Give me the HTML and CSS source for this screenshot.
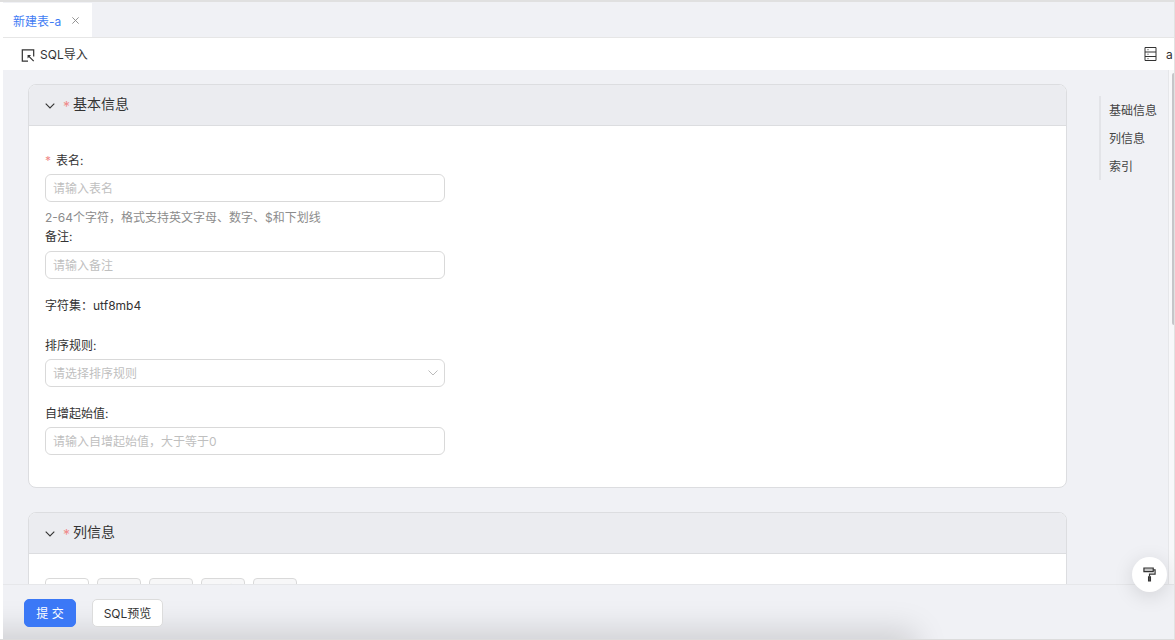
FILE: index.html
```html
<!DOCTYPE html>
<html lang="zh-CN">
<head>
<meta charset="utf-8">
<title>新建表-a</title>
<link rel="stylesheet" href="styles.css">
</head>
<body>
<div class="frame">
  <nav class="tabs">
    <div class="tab"><span class="tab-name">新建表-a</span>
      <svg class="tab-close" viewBox="0 0 10 10"><path d="M1.500 1.500l7 7M8.500 1.500l-7 7"/></svg>
    </div>
  </nav>
  <div class="toolbar">
    <div class="tool">
      <svg class="tool-icon" viewBox="0 0 16 16"><path d="M8 14.500H1.500V1.500h13V9" /><path d="M8.500 8.500l6 6" /><path class="fill" d="M7.500 7.500h4l-4 4z"/></svg>
      <span class="tool-text">SQL导入</span>
    </div>
    <div class="db">
      <svg class="db-icon" viewBox="0 0 13 14"><path d="M1 .5h11v13H1zM1 5h11M1 9.500h11"/><path class="thin" d="M3 2.700h2M3 7.200h2M3 11.700h2"/></svg>
      <span class="db-name">a</span>
    </div>
  </div>
  <div class="main">
    <div class="content">
      <section class="card">
        <header class="card-head">
          <svg class="chevron" viewBox="0 0 10 6"><path d="M.7.7L5 5l4.300-4.300"/></svg>
          <span class="star">*</span><span class="card-title">基本信息</span>
        </header>
        <div class="card-body basic">
          <div class="field tight">
            <label class="label"><span class="req">*</span>表名:</label>
            <input class="input" placeholder="请输入表名">
            <div class="help">2-64个字符，格式支持英文字母、数字、$和下划线</div>
          </div>
          <div class="field">
            <label class="label">备注:</label>
            <input class="input" placeholder="请输入备注">
          </div>
          <div class="charset">字符集：utf8mb4</div>
          <div class="field">
            <label class="label">排序规则:</label>
            <div class="input select"><span class="select-text">请选择排序规则</span>
              <svg class="select-arrow" viewBox="0 0 10 6"><path d="M.5.5L5 5 9.500.5"/></svg>
            </div>
          </div>
          <div class="field last">
            <label class="label">自增起始值:</label>
            <input class="input" placeholder="请输入自增起始值，大于等于0">
          </div>
        </div>
      </section>
      <section class="card">
        <header class="card-head">
          <svg class="chevron" viewBox="0 0 10 6"><path d="M.7.7L5 5l4.300-4.300"/></svg>
          <span class="star">*</span><span class="card-title">列信息</span>
        </header>
        <div class="card-body cols">
          <button class="mini">添加</button>
          <button class="mini off">上移</button>
          <button class="mini off">下移</button>
          <button class="mini off">删除</button>
          <button class="mini off">复制</button>
        </div>
      </section>
    </div>
    <aside class="anchor">
      <a class="anchor-link">基础信息</a>
      <a class="anchor-link">列信息</a>
      <a class="anchor-link">索引</a>
    </aside>
    <div class="gutter"><div class="thumb"></div></div>
  </div>
  <footer class="foot">
    <button class="btn primary">提 交</button>
    <button class="btn">SQL预览</button>
  </footer>
  <button class="fab" aria-label="主题">
    <svg viewBox="0 0 14 16"><path class="roller" d="M1 1h10v4H1z"/><path d="M11 3h2v4.500H7V10"/><path d="M6 10.500h2v4.500H6z" class="solid"/></svg>
  </button>
</div>
</body>
</html>
```
FILE: styles.css
```css
* { box-sizing: border-box; }
html, body { margin: 0; height: 100%; overflow: hidden; }
body {
  font-family: Inter, "Noto Sans CJK SC", "Liberation Sans", sans-serif;
  font-size: 12px;
  color: #333;
  background: #fff;
}
.frame {
  position: relative;
  height: 100vh;
  display: flex;
  flex-direction: column;
  padding-left: 3px;
  border-top: 2px solid #e0e0e0;
  border-bottom: 1px solid #dcdcdc;
  border-right: 1px solid #e2e2e2;
  overflow: hidden;
}
.tabs {
  height: 36px;
  flex: none;
  background: #f0f1f5;
  border-bottom: 1px solid #e6e6e6;
  padding-top: 1px;
}
.tab {
  width: 89px;
  height: 34px;
  background: #fff;
  display: flex;
  align-items: center;
  padding-left: 10px;
}
.tab-name { color: #3f7cf4; font-size: 12px; }
.tab-close { width: 9px; height: 9px; margin-left: 10px; margin-top: 1px; }
.tab-close path { stroke: #888; stroke-width: 1; fill: none; }
.toolbar {
  height: 32px;
  flex: none;
  background: #fff;
  display: flex;
  align-items: center;
  justify-content: space-between;
  padding-left: 18px;
}
.tool { display: flex; align-items: center; gap: 5px; color: #333; }
.tool-text { margin-top: -2px; }
.tool-icon { width: 14px; height: 15px; margin-top: 3px; }
.tool-icon path { fill: none; stroke: #333; stroke-width: 1.4; }
.tool-icon .fill { fill: #333; stroke: none; }
.db { display: flex; align-items: center; gap: 9px; width: 30px; flex: none; overflow: hidden; }
.db-icon { width: 13px; height: 14px; flex: none; }
.db-icon path { fill: none; stroke: #333; stroke-width: 1; }
.db-icon .thin { stroke: #999; }
.db-name { font-size: 12px; }
.main {
  flex: 1;
  min-height: 0;
  display: flex;
  background: #f0f1f5;
  overflow: hidden;
}
.content {
  width: 1096px;
  flex: none;
  padding: 14px 0 0 25px;
}
.card {
  width: 1039px;
  background: #fff;
  border: 1px solid #dcdde0;
  border-radius: 8px;
  overflow: hidden;
  margin-bottom: 24px;
}
.card-head {
  height: 41px;
  background: #ebecf0;
  border-bottom: 1px solid #dcdde0;
  display: flex;
  align-items: center;
  padding-left: 16px;
}
.chevron { width: 10px; height: 6px; margin-top: 1px; }
.chevron path { fill: none; stroke: #333; stroke-width: 1.1; }
.star { color: #f08a8a; font-size: 14px; margin-left: 8px; width: 8px; line-height: 14px; padding-top: 3px; }
.card-title { font-size: 14px; color: #333; margin: -2px 0 0 2px; line-height: 18px; }
.card-body { padding-left: 16px; }
.basic { padding-top: 26px; padding-bottom: 32px; }
.field { display: flex; flex-direction: column; align-items: flex-start; margin-bottom: 18px; }
.field.tight { margin-bottom: 0; }
.field.tight + .field .label { margin-bottom: 5px; }
.field.last { margin-bottom: 0; }
.label { line-height: 18px; height: 18px; margin-bottom: 4px; color: #333; }
.req { color: #f08a8a; margin-right: 5px; }
.input {
  width: 400px;
  height: 28px;
  border: 1px solid #d9d9d9;
  border-radius: 6px;
  background: #fff;
  padding: 0 7px;
  font: inherit;
  outline: none;
}
.input::placeholder { color: #bfbfbf; }
.select {
  display: flex;
  align-items: center;
  justify-content: space-between;
  color: #bfbfbf;
  padding-right: 6px;
}
.select-text { padding-bottom: 2px; }
.select-arrow { width: 10px; height: 6px; }
.select-arrow path { fill: none; stroke: #bbb; stroke-width: 1; }
.help { color: #8c8c8c; line-height: 18px; margin-top: 7px; margin-bottom: 1px; }
.charset { line-height: 18px; margin-bottom: 22px; color: #333; }
.cols { display: flex; gap: 8px; padding-top: 24px; padding-bottom: 20px; }
.mini {
  width: 44px;
  height: 28px;
  border: 1px solid #d9d9d9;
  border-radius: 4px;
  background: #fff;
  font: inherit;
  color: #333;
  padding: 0 0 6px;
}
.mini.off { background: #f7f7f8; color: #bbb; }
.anchor {
  width: 69px;
  flex: none;
  align-self: flex-start;
  margin: 26px 0 0;
  border-left: 2px solid #e3e4e8;
  padding-left: 8px;
  height: 84px;
  display: flex;
  flex-direction: column;
}
.anchor-link { height: 28px; line-height: 30px; color: #444; }
.gutter {
  width: 6px;
  flex: none;
  background: #f8f8fa;
  border-left: 1px solid #e6e7ea;
  padding: 3px 0 0 3px;
}
.thumb { width: 3px; height: 252px; background: #c6c6c9; border-radius: 2px 0 0 2px; }
.foot {
  position: relative;
  height: 55px;
  flex: none;
  background: #f0f1f5;
  border-top: 1px solid #e6e7ea;
  display: flex;
  align-items: flex-start;
  gap: 16px;
  padding: 14px 0 0 21px;
  overflow: hidden;
}
.foot::after {
  content: "";
  position: absolute;
  left: -30px;
  right: 270px;
  bottom: -24px;
  height: 20px;
  box-shadow: 0 0 32px 12px rgba(0, 0, 0, .15);
}
.btn {
  position: relative;
  z-index: 1;
  height: 28px;
  border: 1px solid #dcdcdc;
  border-radius: 5px;
  background: #fff;
  font: inherit;
  color: #333;
  width: 71px;
  padding: 0 0 2px;
}
.primary {
  width: 52px;
  background: #3b78f6;
  border-color: #3b78f6;
  color: #fff;
}
.fab {
  position: absolute;
  left: 1132px;
  top: 555px;
  width: 35px;
  height: 35px;
  border: 0;
  border-radius: 50%;
  background: #fff;
  box-shadow: 0 4px 20px rgba(0, 0, 0, .13);
  display: flex;
  align-items: center;
  justify-content: center;
  padding: 0;
}
.fab svg { width: 13px; height: 15px; }
.fab path { fill: none; stroke: #333; stroke-width: 1.3; }
.fab .roller { fill: #c4c4c4; }
.fab .solid { fill: #666; }
```
